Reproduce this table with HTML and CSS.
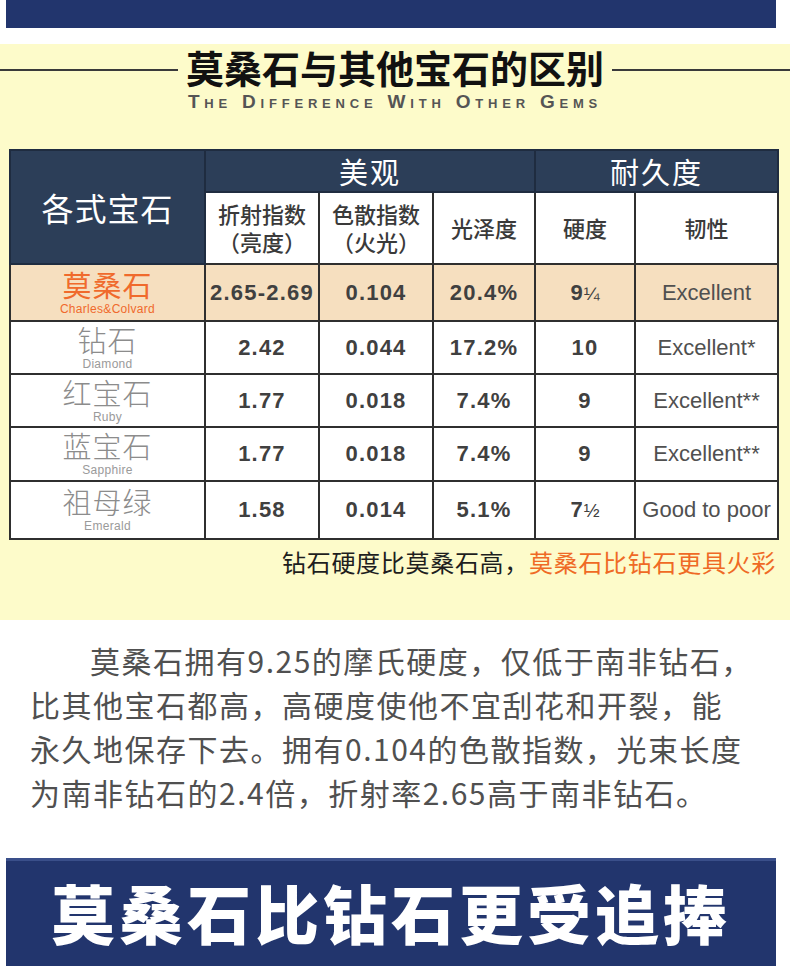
FILE: index.html
```html
<!DOCTYPE html>
<html lang="zh-CN">
<head>
<meta charset="utf-8">
<title>莫桑石与其他宝石的区别</title>
<link rel="stylesheet" href="styles.css">
</head>
<body>
<div class="banner banner-top"></div>

<section class="compare">
  <div class="title-row">
    <span class="rule"></span>
    <h1 class="title">莫桑石与其他宝石的区别</h1>
    <span class="rule"></span>
  </div>
  <p class="subtitle">The Difference With Other Gems</p>

  <table class="gems">
    <colgroup>
      <col class="c-name">
      <col class="c-ri">
      <col class="c-disp">
      <col class="c-lus">
      <col class="c-hard">
      <col class="c-tough">
    </colgroup>
    <thead>
      <tr class="head-1">
        <th rowspan="2" class="head-main">各式宝石</th>
        <th colspan="3" class="group">美观</th>
        <th colspan="2" class="group">耐久度</th>
      </tr>
      <tr class="head-2">
        <th>折射指数<br>（亮度）</th>
        <th>色散指数<br>（火光）</th>
        <th>光泽度</th>
        <th>硬度</th>
        <th>韧性</th>
      </tr>
    </thead>
    <tbody>
      <tr class="row-moi">
        <td class="name"><div class="name-cn">莫桑石</div><div class="name-en">Charles&amp;Colvard</div></td>
        <td class="num">2.65-2.69</td>
        <td class="num">0.104</td>
        <td class="num">20.4%</td>
        <td class="num">9<span class="frac">¼</span></td>
        <td class="txt">Excellent</td>
      </tr>
      <tr class="row-dia">
        <td class="name"><div class="name-cn">钻石</div><div class="name-en">Diamond</div></td>
        <td class="num">2.42</td>
        <td class="num">0.044</td>
        <td class="num">17.2%</td>
        <td class="num">10</td>
        <td class="txt">Excellent*</td>
      </tr>
      <tr class="row-ruby">
        <td class="name"><div class="name-cn">红宝石</div><div class="name-en">Ruby</div></td>
        <td class="num">1.77</td>
        <td class="num">0.018</td>
        <td class="num">7.4%</td>
        <td class="num">9</td>
        <td class="txt">Excellent**</td>
      </tr>
      <tr class="row-sap">
        <td class="name"><div class="name-cn">蓝宝石</div><div class="name-en">Sapphire</div></td>
        <td class="num">1.77</td>
        <td class="num">0.018</td>
        <td class="num">7.4%</td>
        <td class="num">9</td>
        <td class="txt">Excellent**</td>
      </tr>
      <tr class="row-em">
        <td class="name"><div class="name-cn">祖母绿</div><div class="name-en">Emerald</div></td>
        <td class="num">1.58</td>
        <td class="num">0.014</td>
        <td class="num">5.1%</td>
        <td class="num">7<span class="frac">½</span></td>
        <td class="txt">Good to poor</td>
      </tr>
    </tbody>
  </table>

  <p class="caption"><span class="cap-dark">钻石硬度比莫桑石高，</span><span class="cap-orange">莫桑石比钻石更具火彩</span></p>
</section>

<p class="desc"><span class="line first">莫桑石拥有9.25的摩氏硬度，仅低于南非钻石，</span><span class="line">比其他宝石都高，高硬度使他不宜刮花和开裂，能</span><span class="line">永久地保存下去。拥有0.104的色散指数，光束长度</span><span class="line">为南非钻石的2.4倍，折射率2.65高于南非钻石。</span></p>

<div class="banner banner-bottom">
  <h2 class="banner-title">莫桑石比钻石更受追捧</h2>
</div>
</body>
</html>
```

FILE: styles.css
```css
html, body {
  margin: 0;
  padding: 0;
  background: #ffffff;
}

body {
  width: 790px;
  overflow: hidden;
  font-family: "Noto Sans CJK SC", "Noto Sans", sans-serif;
}

.banner {
  background: #22356d;
  margin-left: 6px;
  width: 770px;
}

.banner-top {
  height: 28px;
}

.compare {
  margin-top: 16px;
  background: #fdfbca;
  height: 576px;
  padding-top: 5px;
  box-sizing: border-box;
}

.title-row {
  display: flex;
  align-items: center;
  gap: 8px;
  height: 42px;
}

.rule {
  flex: 1;
  height: 2px;
  background: #3a3a3a;
}

.title {
  margin: 0;
  font-family: "Liberation Sans", "Noto Sans CJK SC", sans-serif;
  font-weight: 700;
  font-size: 38px;
  line-height: 42px;
  color: #111111;
}

.subtitle {
  margin: 1px 0 0;
  text-align: center;
  font-family: "Liberation Sans", Arial, sans-serif;
  font-weight: 700;
  font-variant: small-caps;
  font-size: 19px;
  line-height: 20px;
  letter-spacing: 4.8px;
  color: #555555;
}

.gems {
  margin: 37px 0 0 9px;
  width: 768px;
  table-layout: fixed;
  border-collapse: collapse;
}

.c-name { width: 195px; }
.c-ri { width: 114px; }
.c-disp { width: 114px; }
.c-lus { width: 102px; }
.c-hard { width: 100px; }
.c-tough { width: 143px; }

.gems th,
.gems td {
  border: 2px solid #2f2f2f;
  padding: 0;
  text-align: center;
  vertical-align: middle;
}

.head-1 { height: 42px; }

.head-1 th {
  background: #2c3e58;
  color: #ffffff;
  font-weight: 400;
  font-size: 29px;
  line-height: 36px;
  letter-spacing: 2px;
  border-color: #1f2c40;
}

.head-1 .head-main {
  font-size: 32px;
  letter-spacing: 1px;
}

.head-2 { height: 72px; }

.head-2 th {
  background: #ffffff;
  color: #3a3a3a;
  font-family: "Liberation Sans", "Noto Sans CJK SC", sans-serif;
  font-weight: 500;
  font-size: 22px;
  line-height: 28px;
  padding-top: 4px;
}

.gems tbody tr { height: 53px; background: #ffffff; }
.gems tbody tr.row-moi { height: 57px; background: #f6dfbf; }
.gems tbody tr.row-sap { height: 54px; }
.gems tbody tr.row-em { height: 58px; }

.name-cn {
  font-family: "Liberation Sans", "Noto Sans CJK SC", sans-serif;
  font-size: 29px;
  font-weight: 300;
  line-height: 32px;
  color: #8c8c8c;
  letter-spacing: 1px;
}

.name-en {
  font-family: "Liberation Sans", Arial, sans-serif;
  font-size: 12px;
  line-height: 12px;
  letter-spacing: 0.3px;
  color: #9a9a9a;
}

.row-moi .name-cn,
.row-moi .name-en {
  color: #f06a2c;
}

.row-moi .name-cn {
  font-weight: 400;
}

.num {
  font-family: "Liberation Sans", Arial, sans-serif;
  font-weight: 700;
  font-size: 22px;
  letter-spacing: 1.2px;
  color: #404040;
}

.frac {
  font-weight: 400;
  font-size: 19px;
  letter-spacing: 0;
}

.txt {
  font-family: "Liberation Sans", Arial, sans-serif;
  font-weight: 400;
  font-size: 22px;
  color: #505050;
}

.caption {
  margin: 7px 14px 0 0;
  text-align: right;
  font-size: 24px;
  line-height: 30px;
  letter-spacing: 0.7px;
}

.cap-dark { color: #1e1e1e; }
.cap-orange { color: #ef6a25; }

.desc {
  margin: 18px 0 0;
  padding: 0 0 0 30px;
  font-size: 30px;
  line-height: 44px;
  letter-spacing: 1.5px;
  color: #505050;
}

.desc .line {
  display: block;
  white-space: nowrap;
}

.desc .line.first {
  padding-left: 60px;
}

.banner-bottom {
  margin-top: 44px;
  height: 120px;
  border-top: 3px solid #3a4f8a;
  display: flex;
  align-items: flex-start;
  justify-content: center;
}

.banner-title {
  margin: 14px 0 0;
  font-size: 64px;
  line-height: 72px;
  font-weight: 900;
  letter-spacing: 4px;
  color: #ffffff;
}
```
